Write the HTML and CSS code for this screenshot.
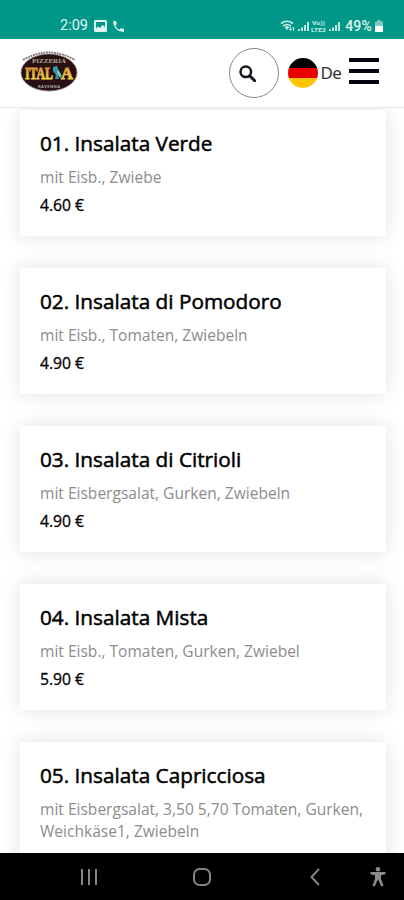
FILE: index.html
```html
<!DOCTYPE html>
<html lang="de">
<head>
<meta charset="utf-8">
<meta name="viewport" content="width=device-width, initial-scale=1">
<title>Pizzeria Italia</title>
<link rel="stylesheet" href="styles.css">
</head>
<body>
<div class="status">
  <div class="status-left">
    <span>2:09</span>
    <svg width="13" height="12" viewBox="0 0 13 12"><rect width="13" height="12" rx="1.5" fill="#e0f5f1"/><path d="M2 2h9v5L8.500 5 6 8 4 6.500 2 8.500z" fill="#009688"/></svg>
    <svg width="11" height="11" viewBox="3 3 18 18"><path fill="#e0f5f1" d="M6.620 10.790a15.500 15.500 0 0 0 6.590 6.590l2.200-2.200a1 1 0 0 1 1.020-.24c1.120.37 2.330.57 3.570.57a1 1 0 0 1 1 1V20a1 1 0 0 1-1 1A17 17 0 0 1 3 4a1 1 0 0 1 1-1h3.500a1 1 0 0 1 1 1c0 1.250.2 2.450.57 3.570a1 1 0 0 1-.25 1.020z"/></svg>
  </div>
  <div class="status-right">
    <svg width="60" height="14" viewBox="0 0 60 14" fill="none" stroke="#c9eee7">
      <path d="M1 4.500Q7 0 13 4.500M3 7Q7 4 11 7" stroke-width="1.600"/><path d="M4.500 8Q7 6 9.500 8L7 11z" fill="#c9eee7" stroke="none"/>
      <path d="M10.500 8v3.500m-1.500-1.500l1.500 1.500L12 10M13.500 12V8.500M12.300 9.500l1.200-1.200 1.200 1.200"/>
      <path d="M19 12v-2M22 12V8.500M25 12V6M28 12V3M50 12v-2M53 12V8.500M56 12V6M59 12V3" stroke-width="1.900"/>
      <g fill="#c9eee7" stroke="none" class="volte"><text x="32" y="6" textLength="13" lengthAdjust="spacingAndGlyphs">Vo))</text><text x="31" y="12.500" textLength="15" lengthAdjust="spacingAndGlyphs">LTE2</text></g>
    </svg>
    <span>49%</span>
    <svg width="8" height="12" viewBox="0 0 8 12"><path d="M2.500 0h3v1.500H8V12H0V1.500h2.500z" fill="#80cbc1"/><path d="M0 6h8v6H0z" fill="#fff"/></svg>
  </div>
</div>
<header class="header">
  <svg class="logo" width="58" height="44" viewBox="0 0 58 44">
    <defs>
      <linearGradient id="gold" x1="0" x2="0" y1="0" y2="1"><stop offset="0" stop-color="#d78b32"/><stop offset="1" stop-color="#f4df55"/></linearGradient>
    </defs>
    <path d="M3 11Q29-4 55 11" fill="none" stroke="#8a8080" stroke-width="2" stroke-dasharray="2 .7"/>
    <ellipse cx="29" cy="23.500" rx="28" ry="18.500" fill="#291012" stroke="#918486" stroke-width=".8"/>
    <text class="logo-top" x="12" y="13.500" textLength="34">PIZZERIA</text>
    <text class="logo-main" x="5" y="29.500" textLength="28" lengthAdjust="spacingAndGlyphs">ITAL</text>
    <text class="logo-main" x="41" y="29.500" textLength="12" lengthAdjust="spacingAndGlyphs">A</text>
    <path d="M33 18l4-1 2 5 3 5-1 2-3-3 1 4h-4l1-4-3-4z" fill="#3595ad"/><path d="M38 21l3 4-1 4-3-5z" fill="#83c6a7"/>
    <text class="logo-sub" x="18" y="38.500" textLength="22">RAVENNA</text>
  </svg>
  <div class="search">
    <svg width="17" height="17" viewBox="0 0 17 17" fill="none" stroke="#15151c"><circle cx="6.800" cy="6.800" r="5.300" stroke-width="2.500"/><path d="M10.700 10.700l5 5" stroke-width="3" stroke-linecap="round"/></svg>
  </div>
  <div class="lang">
    <div class="flag"></div>
    <span>De</span>
  </div>
  <div class="burger"><i></i><i></i><i></i></div>
</header>
<main class="menu">
  <article class="card"><h2>01. Insalata Verde</h2><p>mit Eisb., Zwiebe</p><b>4.60 €</b></article>
  <article class="card"><h2>02. Insalata di Pomodoro</h2><p>mit Eisb., Tomaten, Zwiebeln</p><b>4.90 €</b></article>
  <article class="card"><h2>03. Insalata di Citrioli</h2><p>mit Eisbergsalat, Gurken, Zwiebeln</p><b>4.90 €</b></article>
  <article class="card"><h2>04. Insalata Mista</h2><p>mit Eisb., Tomaten, Gurken, Zwiebel</p><b>5.90 €</b></article>
  <article class="card last"><h2>05. Insalata Capricciosa</h2><p>mit Eisbergsalat, 3,50 5,70 Tomaten, Gurken, Weichkäse1, Zwiebeln</p></article>
</main>
<nav class="navbar">
  <svg width="404" height="47" viewBox="0 0 404 47" fill="none" stroke="#858585" stroke-width="2">
    <path d="M82 16v16M89 16v16M96 16v16"/>
    <rect x="194" y="16" width="16" height="16" rx="5.500"/>
    <path d="M319 16l-7.500 8 7.500 8"/>
    <g fill="#8c8c8c" stroke="none"><circle cx="378" cy="16.300" r="2.300"/><path d="M370.500 19h15v2.200l-4.500 1v3.500l2.500 7-2.200.7-2.800-6.200h-1l-2.800 6.200-2.200-.7 2.500-7v-3.500l-4.500-1z"/></g>
  </svg>
</nav>
</body>
</html>
```
FILE: styles.css
```css
* { box-sizing: border-box; margin: 0; padding: 0; }

body {
  width: 404px;
  height: 900px;
  overflow: hidden;
  display: flex;
  flex-direction: column;
  background: #fff;
  font-family: "Open Sans", sans-serif;
  color: #000;
}

svg { display: block; }

.status {
  height: 39px;
  flex: none;
  padding: 12px 21px 0 60px;
  display: flex;
  justify-content: space-between;
  background: #009688;
  color: #e0f5f1;
  font: 14.5px/28px Roboto, sans-serif;
}

.status-left, .status-right { display: flex; align-items: center; height: 28px; }
.status-left { gap: 6px; }
.status-right { gap: 3px; font-size: 14px; font-weight: 500; letter-spacing: .2px; }
.status-right span { margin-left: 2px; }
.volte { font: bold 6px Roboto, sans-serif; letter-spacing: 0; }

.header {
  position: relative;
  z-index: 1;
  height: 69px;
  flex: none;
  display: flex;
  align-items: center;
  padding: 0 25px 0 20px;
  background: #fff;
  border-bottom: 1px solid #e9e9e9;
}

.logo { margin-bottom: 4px; }
.logo-top { font: bold 7px "Liberation Serif", serif; fill: #b8a79d; }
.logo-main { font: bold 16px "Liberation Serif", serif; fill: url(#gold); stroke: url(#gold); stroke-width: .8px; }
.logo-sub { font: bold 4px "Open Sans", sans-serif; fill: #aaa; }

.search {
  width: 50px;
  height: 50px;
  margin-left: auto;
  display: grid;
  place-items: center;
  padding-right: 12px;
  border: 1px solid #888;
  border-radius: 50%;
}

.lang { display: flex; align-items: center; gap: 3px; margin-left: 9px; font: 17px/24px "Noto Sans", sans-serif; letter-spacing: -.8px; color: #333; }

.flag {
  width: 30px;
  height: 30px;
  border-radius: 50%;
  background: linear-gradient(#000 0 33.3%, #e90000 33.3% 67%, #ffc400 67%);
}

.burger { display: grid; gap: 7px; width: 30px; margin-left: 8px; padding-bottom: 4px; }
.burger i { height: 4px; background: #050510; }

.menu {
  flex: 1;
  min-height: 0;
  overflow: hidden;
  display: flex;
  flex-direction: column;
  gap: 32px;
  padding: 2px 18px 0 20px;
}

.card {
  height: 126px;
  flex: none;
  padding: 17px 20px 0;
  background: #fff;
  box-shadow: 0 0 20px rgba(0, 0, 0, .12);
}

.card.last { height: 148px; }
.card h2 { font-size: 20.75px; font-weight: 400; line-height: 32px; -webkit-text-stroke: .5px #000; white-space: nowrap; }
.card p { margin-top: 7px; font-size: 15.55px; line-height: 22px; color: #8c8c8c; }
.card b { display: block; margin-top: 5px; font-size: 15.7px; font-weight: 400; line-height: 24px; -webkit-text-stroke: .3px #000; }

.navbar { height: 47px; flex: none; background: #000; }
```
